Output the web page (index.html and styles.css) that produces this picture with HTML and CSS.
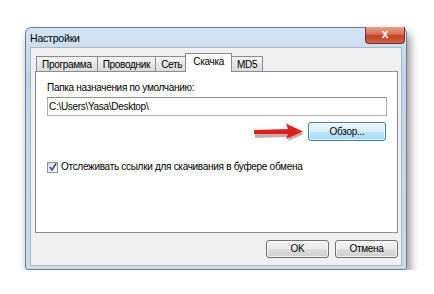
FILE: index.html
```html
<!DOCTYPE html>
<html lang="ru">

<head>
  <meta charset="UTF-8">
  <title>Настройки</title>
  <link rel="stylesheet" href="styles.css">
</head>

<body>
  <div class="window">
    <div class="titlebar">
      <span class="title">Настройки</span>
      <div class="close">x</div>
    </div>

    <div class="client">
      <div class="tabs">
        <div class="tab">Программа</div>
        <div class="tab">Проводник</div>
        <div class="tab">Сеть</div>
        <div class="tab active">Скачка</div>
        <div class="tab">MD5</div>
      </div>

      <div class="panel">
        <div class="label">Папка назначения по умолчанию:</div>
        <div class="input">C:\Users\Yasa\Desktop\</div>
        <div class="browse-row">
          <svg class="arrow" width="52" height="18" viewBox="0 0 52 18">
            <path d="M1 10 L35 9 L34 3 L50 10 L34 17 L35 13 L1 14 Z" fill="#5a1410" opacity="0.35" transform="translate(1 1)" />
            <path d="M1 7 L35 6 L33 0.5 L50 8.5 L33 16 L35 11 L1 11 Z" fill="#dc221c" />
          </svg>
          <div class="btn default">Обзор...</div>
        </div>
        <label class="check">
          <span class="box">
            <svg width="8" height="8" viewBox="0 0 8 8">
              <path d="M1 4 L3 7 L7 0.5" fill="none" stroke="#3b4f8a" stroke-width="1.6" />
            </svg>
          </span>
          Отслеживать ссылки для скачивания в буфере обмена
        </label>
      </div>

      <div class="buttons">
        <div class="btn">OK</div>
        <div class="btn">Отмена</div>
      </div>
    </div>
  </div>
</body>

</html>
```

FILE: styles.css
```css
body {
  margin: 0;
  background: #fff;
  font-family: "Liberation Sans", Arial, sans-serif;
  font-size: 10px;
  letter-spacing: -0.3px;
  color: #000;
}

.window {
  margin: 27px 0 0 25px;
  width: 382px;
  height: 243px;
  box-sizing: border-box;
  border: 1px solid #6f7d8c;
  border-radius: 6px 6px 3px 3px;
  background: linear-gradient(#d3e3f4, #c0d5ec 20%, #cbdbed);
  box-shadow: 3px 6px 10px rgba(0, 0, 0, 0.45);
  display: flex;
  flex-direction: column;
}

.titlebar {
  height: 19px;
  display: flex;
  justify-content: space-between;
  align-items: center;
  padding-left: 4px;
}

.title {
  font-size: 10.5px;
  letter-spacing: -0.2px;
  padding-top: 1px;
}

.close {
  align-self: flex-start;
  margin: -1px 1px 0 0;
  width: 38px;
  height: 16px;
  border: 1px solid #7c3024;
  border-top: none;
  border-radius: 0 0 4px 4px;
  background: linear-gradient(#eaa08c, #d8705a 45%, #c23f27 55%, #d0654a);
  color: #fff;
  font-weight: bold;
  font-size: 12px;
  text-align: center;
  line-height: 14px;
}

.client {
  flex: 1;
  margin: 0 4px 3px 4px;
  border: 1px solid #a9b7c6;
  background: #f0f0f0;
  padding-top: 6px;
}

.tabs {
  display: flex;
  align-items: flex-end;
  height: 18px;
  margin: 0 0 -1px 5px;
}

.tab {
  height: 15px;
  padding: 0 5px;
  border: 1px solid #898c95;
  border-bottom: none;
  margin-right: -1px;
  background: linear-gradient(#f4f4f4, #e6e6e6 50%, #d9d9d9);
  line-height: 16px;
  white-space: nowrap;
}

.tab.active {
  position: relative;
  z-index: 1;
  height: 18px;
  margin: 0 -1px 0 -2px;
  padding: 0 7px;
  background: #fff;
  line-height: 16px;
}

.panel {
  position: relative;
  box-sizing: border-box;
  height: 162px;
  margin: 0 3px 0 4px;
  border: 1px solid #898c95;
  background: #fff;
  padding: 9px 10px 0 11px;
}

.label {
  line-height: 14px;
}

.input {
  margin-top: 2px;
  height: 17px;
  border: 1px solid #abadb3;
  border-top-color: #8e8f8f;
  padding-left: 1px;
  line-height: 17px;
}

.browse-row {
  display: flex;
  justify-content: flex-end;
  align-items: center;
  gap: 3px;
  margin-top: 6px;
}

.arrow {
  display: block;
}

.btn {
  width: 61px;
  height: 16px;
  border: 1px solid #707070;
  border-radius: 3px;
  background: linear-gradient(#f2f2f2, #ebebeb 50%, #dddddd 50%, #cfcfcf);
  text-align: center;
  line-height: 16px;
  box-shadow: inset 0 0 0 1px rgba(255, 255, 255, 0.7);
}

.btn.default {
  width: 76px;
  height: 17px;
  margin-right: 1px;
  border-color: #3c7fb1;
  background: linear-gradient(#eaf6fd, #d9f0fc 50%, #bee6fd 50%, #a7d9f5);
  line-height: 17px;
}

.check {
  display: flex;
  align-items: center;
  gap: 3px;
  margin-top: 19px;
  line-height: 14px;
}

.box {
  width: 9px;
  height: 9px;
  border: 1px solid #8e8f8f;
  background: linear-gradient(135deg, #dcdcdc, #fff);
  display: flex;
  align-items: center;
  justify-content: center;
}

.buttons {
  display: flex;
  justify-content: flex-end;
  gap: 6px;
  margin: 7px 3px 0 0;
}
```
